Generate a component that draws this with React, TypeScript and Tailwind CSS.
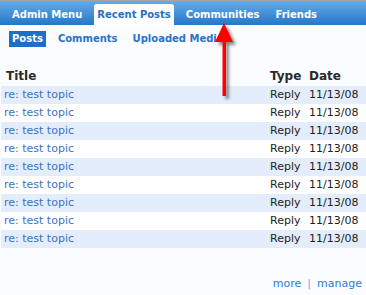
import React from 'react';

const topTabs = ['Admin Menu', 'Recent Posts', 'Communities', 'Friends'];
const subTabs = ['Posts', 'Comments', 'Uploaded Media'];
const posts = Array.from({ length: 9 }, () => ({ title: 're: test topic', type: 'Reply', date: '11/13/08' }));

const App = () => {
  return (
    <div
      className="relative w-[366px] h-[295px] overflow-hidden bg-[#fbfcff] text-[11px] flex flex-col"
      style={{ fontFamily: '"DejaVu Sans", Verdana, sans-serif' }}
    >
      {/* top menu */}
      <div className="h-[25px] border-t border-[#a4a4a4] bg-gradient-to-b from-[#64ace9] to-[#2377c8] flex items-end pl-[8px] gap-[8px]">
        {topTabs.map((t) => (
          <div
            key={t}
            className={
              t === 'Recent Posts'
                ? 'h-[21px] px-[3px] leading-[21px] text-[10px] font-bold bg-white text-[#2b6fc0] rounded-t-[3px]'
                : 'h-[21px] px-[4px] leading-[21px] text-[10px] font-bold text-white'
            }
          >
            {t}
          </div>
        ))}
      </div>

      {/* sub tabs */}
      <div className="mt-[6px] pl-[9px] flex gap-[9px]">
        {subTabs.map((t) => (
          <div
            key={t}
            className={
              t === 'Posts'
                ? 'h-[16px] px-[3px] leading-[16px] text-[10px] font-bold bg-[#1d6fc6] text-white'
                : 'h-[16px] px-[3px] leading-[16px] text-[10px] font-bold text-[#2a72c8]'
            }
          >
            {t}
          </div>
        ))}
      </div>

      {/* table */}
      <div className="mt-[19px] ml-[1px]">
        <div className="grid grid-cols-[269px_39px_1fr] h-[20px] items-center font-bold text-[12px] text-[#2a2a2a]">
          <div className="pl-[5px]">Title</div>
          <div>Type</div>
          <div>Date</div>
        </div>
        {posts.map((p, i) => (
          <div
            key={i}
            className={`grid grid-cols-[269px_39px_1fr] h-[18px] items-center ${i % 2 === 0 ? 'bg-[#e3edfb]' : 'bg-white'}`}
          >
            <div className="pl-[3px] text-[#3a72c6]">{p.title}</div>
            <div className="text-[#222]">{p.type}</div>
            <div className="text-[#222]">{p.date}</div>
          </div>
        ))}
      </div>

      {/* footer links */}
      <div className="mt-auto mb-[2px] pr-[4px] flex justify-end gap-[6px] text-[#2f7bd0] leading-[18px]">
        <span>more</span>
        <span className="text-[#7aa8dd]">|</span>
        <span>manage</span>
      </div>

      {/* annotation arrow */}
      <svg className="absolute left-[210px] top-[18px]" width="36" height="86" viewBox="0 0 36 86">
        <defs>
          <filter id="arrowShadow" x="-50%" y="-20%" width="200%" height="150%">
            <feDropShadow dx="3" dy="3" stdDeviation="1.5" floodColor="#000" floodOpacity="0.45" />
          </filter>
        </defs>
        <g filter="url(#arrowShadow)" fill="#ff0000">
          <polygon points="14,5 5,24 23,24" />
          <rect x="12.5" y="23" width="3.5" height="55" />
        </g>
      </svg>
    </div>
  );
};

export default App;
